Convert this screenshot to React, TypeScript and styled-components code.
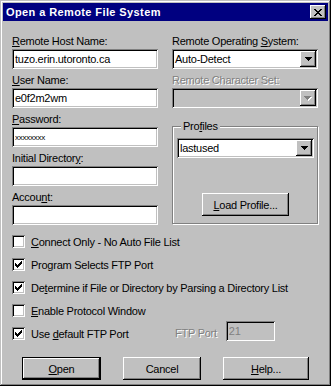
import React from "react";
import styled, { createGlobalStyle, css } from "styled-components";

const GlobalStyle = createGlobalStyle`
  html, body {
    margin: 0;
    padding: 0;
    background: #c0c0c0;
  }
  body {
    font-family: "Liberation Sans", Arial, sans-serif;
    font-size: 11px;
    letter-spacing: -0.25px;
    color: #000;
  }
`;

const raised = css`
  box-shadow: inset -1px -1px #000, inset 1px 1px #fff, inset -2px -2px #808080,
    inset 2px 2px #c0c0c0;
`;

const sunken = css`
  box-shadow: inset 1px 1px #808080, inset -1px -1px #fff, inset 2px 2px #000,
    inset -2px -2px #c0c0c0;
`;

// little bitmap glyphs, drawn one pixel at a time like the real thing
const CLOSE_X = ["XX....XX", ".XX..XX.", "..XXXX..", "...XX...", "..XXXX..", ".XX..XX.", "XX....XX"];
const CHECK = ["......X", ".....XX", "X...XXX", "XX.XXX.", "XXXXX..", ".XXX...", "..X...."];
const ARROW = ["XXXXXXX", ".XXXXX.", "..XXX..", "...X..."];

const Pixels = ({ rows, color, shadow }: { rows: string[]; color: string; shadow?: string }) => {
  const w = rows[0].length;
  const h = rows.length;
  const cells: { x: number; y: number }[] = [];
  rows.forEach((r, y) => r.split("").forEach((c, x) => c === "X" && cells.push({ x, y })));
  return (
    <svg width={w + (shadow ? 1 : 0)} height={h + (shadow ? 1 : 0)} shapeRendering="crispEdges">
      {shadow &&
        cells.map((c) => <rect key={`s${c.x}-${c.y}`} x={c.x + 1} y={c.y + 1} width={1} height={1} fill={shadow} />)}
      {cells.map((c) => (
        <rect key={`${c.x}-${c.y}`} x={c.x} y={c.y} width={1} height={1} fill={color} />
      ))}
    </svg>
  );
};

const Window = styled.div`
  width: 331px;
  height: 386px;
  box-sizing: border-box;
  padding: 3px;
  background: #c0c0c0;
  display: flex;
  flex-direction: column;
  box-shadow: inset -1px -1px #000, inset 1px 1px #c0c0c0, inset -2px -2px #808080,
    inset 2px 2px #fff;
`;

const TitleBar = styled.div`
  height: 18px;
  background: #000080;
  color: #fff;
  display: flex;
  align-items: center;
  justify-content: space-between;
  padding: 0 2px 0 3px;
`;

const Title = styled.span`
  font-weight: bold;
  letter-spacing: 0.4px;
`;

const CloseButton = styled.div`
  width: 16px;
  height: 14px;
  background: #c0c0c0;
  display: flex;
  align-items: center;
  justify-content: center;
  ${raised}
`;

const Body = styled.div`
  display: flex;
  flex-direction: column;
  padding: 14px 10px 0 9px;
`;

const Columns = styled.div`
  display: grid;
  grid-template-columns: 146px 146px;
  column-gap: 14px;
`;

const Column = styled.div`
  display: flex;
  flex-direction: column;
  gap: 5px;
`;

const Field = styled.div`
  display: flex;
  flex-direction: column;
  gap: 1px;
`;

const Label = styled.label<{ $disabled?: boolean }>`
  line-height: 13px;
  white-space: nowrap;
  color: ${(p) => (p.$disabled ? "#808080" : "#000")};
  text-shadow: ${(p) => (p.$disabled ? "1px 1px 0 #fff" : "none")};
`;

const TextBox = styled.input<{ $small?: boolean; $disabled?: boolean }>`
  height: 20px;
  width: 100%;
  box-sizing: border-box;
  border: none;
  outline: none;
  margin: 0;
  padding: 0 3px;
  font-family: inherit;
  font-size: ${(p) => (p.$small ? "8px" : "11px")};
  letter-spacing: -0.25px;
  background: ${(p) => (p.$disabled ? "#c0c0c0" : "#fff")};
  color: ${(p) => (p.$disabled ? "#808080" : "#000")};
  ${sunken}
`;

const Combo = styled.div<{ $disabled?: boolean }>`
  height: 20px;
  box-sizing: border-box;
  padding: 2px;
  display: flex;
  align-items: center;
  background: ${(p) => (p.$disabled ? "#c0c0c0" : "#fff")};
  ${sunken}
`;

const ComboText = styled.div`
  flex: 1;
  padding-left: 1px;
  line-height: 16px;
`;

const DropButton = styled.div`
  width: 16px;
  height: 16px;
  background: #c0c0c0;
  display: flex;
  align-items: center;
  justify-content: center;
  ${raised}
`;

const Group = styled.div`
  margin-top: 13px;
  height: 98px;
  box-sizing: border-box;
  border: 1px solid #808080;
  box-shadow: inset 1px 1px #fff, 1px 1px #fff;
  padding: 0 3px 0 4px;
  display: flex;
  flex-direction: column;
`;

const GroupTitle = styled.span`
  align-self: flex-start;
  margin: -7px 0 0 4px;
  padding: 0 2px;
  line-height: 13px;
  background: #c0c0c0;
`;

const ProfileCombo = styled(Combo)`
  margin-top: 5px;
`;

const PushButton = styled.button<{ $default?: boolean; $width: number }>`
  width: ${(p) => p.$width}px;
  height: 23px;
  box-sizing: border-box;
  margin: 0;
  padding: 0;
  font-family: inherit;
  font-size: 11px;
  letter-spacing: -0.25px;
  color: #000;
  background: #c0c0c0;
  border: ${(p) => (p.$default ? "1px solid #000" : "none")};
  ${raised}
`;

const LoadButton = styled(PushButton)`
  align-self: center;
  margin-top: 35px;
`;

const CheckList = styled.div`
  display: flex;
  flex-direction: column;
  gap: 10px;
  margin-top: 10px;
`;

const CheckRow = styled.div`
  height: 13px;
  display: flex;
  align-items: center;
`;

const CheckItem = styled.div<{ $width?: number }>`
  display: flex;
  align-items: center;
  gap: 6px;
  width: ${(p) => (p.$width ? `${p.$width}px` : "auto")};
`;

const Box = styled.div`
  width: 13px;
  height: 13px;
  box-sizing: border-box;
  background: #fff;
  display: flex;
  align-items: center;
  justify-content: center;
  ${sunken}
`;

const PortField = styled.div`
  display: flex;
  align-items: center;
  gap: 9px;
`;

const PortBox = styled(TextBox)`
  width: 49px;
  margin-bottom: 6px;
`;

const ButtonRow = styled.div`
  display: flex;
  gap: 22px;
  margin: 17px 0 0 10px;
`;

const Check = ({ checked, children, width }: { checked?: boolean; children: React.ReactNode; width?: number }) => (
  <CheckItem $width={width}>
    <Box>{checked && <Pixels rows={CHECK} color="#000" />}</Box>
    <span>{children}</span>
  </CheckItem>
);

export default function App() {
  return (
    <>
      <GlobalStyle />
      <Window>
        <TitleBar>
          <Title>Open a Remote File System</Title>
          <CloseButton>
            <Pixels rows={CLOSE_X} color="#000" />
          </CloseButton>
        </TitleBar>
        <Body>
          <Columns>
            <Column>
              <Field>
                <Label>
                  <u>R</u>emote Host Name:
                </Label>
                <TextBox readOnly value="tuzo.erin.utoronto.ca" />
              </Field>
              <Field>
                <Label>
                  <u>U</u>ser Name:
                </Label>
                <TextBox readOnly value="e0f2m2wm" />
              </Field>
              <Field>
                <Label>
                  <u>P</u>assword:
                </Label>
                <TextBox readOnly $small value="xxxxxxxx" />
              </Field>
              <Field>
                <Label>
                  Initial Director<u>y</u>:
                </Label>
                <TextBox readOnly value="" />
              </Field>
              <Field>
                <Label>
                  Accou<u>n</u>t:
                </Label>
                <TextBox readOnly value="" />
              </Field>
            </Column>
            <Column>
              <Field>
                <Label>
                  Remote Operating <u>S</u>ystem:
                </Label>
                <Combo>
                  <ComboText>Auto-Detect</ComboText>
                  <DropButton>
                    <Pixels rows={ARROW} color="#000" />
                  </DropButton>
                </Combo>
              </Field>
              <Field>
                <Label $disabled>Remote Character Set:</Label>
                <Combo $disabled>
                  <ComboText />
                  <DropButton>
                    <Pixels rows={ARROW} color="#808080" shadow="#fff" />
                  </DropButton>
                </Combo>
              </Field>
              <Group>
                <GroupTitle>
                  Pro<u>f</u>iles
                </GroupTitle>
                <ProfileCombo>
                  <ComboText>lastused</ComboText>
                  <DropButton>
                    <Pixels rows={ARROW} color="#000" />
                  </DropButton>
                </ProfileCombo>
                <LoadButton $width={87}>
                  <u>L</u>oad Profile...
                </LoadButton>
              </Group>
            </Column>
          </Columns>
          <CheckList>
            <CheckRow>
              <Check>
                <u>C</u>onnect Only - No Auto File List
              </Check>
            </CheckRow>
            <CheckRow>
              <Check checked>Program Selects FTP Port</Check>
            </CheckRow>
            <CheckRow>
              <Check checked>
                De<u>t</u>ermine if File or Directory by Parsing a Directory List
              </Check>
            </CheckRow>
            <CheckRow>
              <Check>
                <u>E</u>nable Protocol Window
              </Check>
            </CheckRow>
            <CheckRow>
              <Check checked width={163}>
                Use <u>d</u>efault FTP Port
              </Check>
              <PortField>
                <Label $disabled>FTP Port</Label>
                <PortBox readOnly $disabled value="21" />
              </PortField>
            </CheckRow>
          </CheckList>
          <ButtonRow>
            <PushButton $default $width={79}>
              <u>O</u>pen
            </PushButton>
            <PushButton $width={78}>Cancel</PushButton>
            <PushButton $width={86}>
              <u>H</u>elp...
            </PushButton>
          </ButtonRow>
        </Body>
      </Window>
    </>
  );
}
